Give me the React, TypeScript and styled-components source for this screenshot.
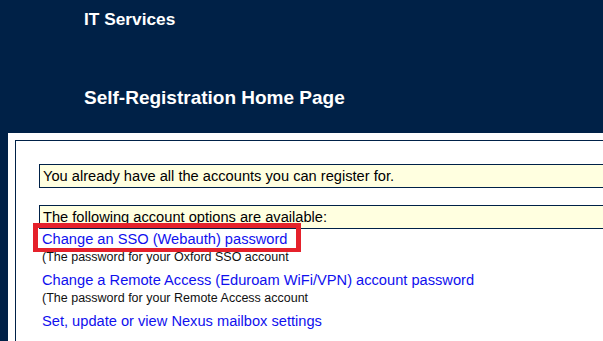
import React from 'react';
import styled, { createGlobalStyle } from 'styled-components';

const GlobalStyle = createGlobalStyle`
	html, body {
		margin: 0;
		padding: 0;
		background: #002147;
		overflow: hidden;
	}
	body {
		font-family: "Liberation Sans", Arial, sans-serif;
	}
`;

const Page = styled.div`
	display: flex;
	flex-direction: column;
	height: 100vh;
	padding-left: 8px;
	box-sizing: border-box;
`;

const Header = styled.header`
	flex: none;
	height: 133px;
	padding-left: 76px;
	box-sizing: border-box;
	color: #ffffff;
	font-weight: bold;
`;

const Brand = styled.div`
	padding-top: 9px;
	font-size: 17.3px;
	line-height: 20px;
`;

const Title = styled.h1`
	margin: 57px 0 0;
	font-size: 19px;
	line-height: 24px;
	font-weight: bold;
`;

const Sheet = styled.main`
	flex: 1;
	display: flex;
	min-height: 0;
	background: #ffffff;
	padding: 7px 0 0 7px;
	box-sizing: border-box;
	overflow: hidden;
`;

const Panel = styled.section`
	flex: 1;
	border: 1px solid #002147;
	border-right: none;
	border-bottom: none;
	padding: 23px 0 0 23px;
	box-sizing: border-box;
	overflow: hidden;
`;

const Notice = styled.div<{ $gap?: number }>`
	border: 1px solid #002147;
	border-right: none;
	background: #ffffe0;
	padding-left: 3px;
	font-size: 14.65px;
	line-height: 22px;
	color: #000000;
	white-space: nowrap;
	margin-bottom: ${(p) => p.$gap ?? 0}px;
`;

const Options = styled.ul`
	list-style: none;
	margin: 0;
	padding: 0 0 0 3px;
`;

const Option = styled.li`
	position: relative;
	margin-bottom: 4px;
`;

const OptionLink = styled.a`
	display: block;
	font-size: 14.65px;
	line-height: 20px;
	color: #1010ee;
	text-decoration: none;
	white-space: nowrap;
`;

const Hint = styled.div`
	font-size: 12.5px;
	line-height: 17px;
	color: #111111;
	white-space: nowrap;
`;

const Highlight = styled.span`
	position: absolute;
	left: -9px;
	top: -6px;
	width: 268px;
	height: 29px;
	border: 5px solid #e5212b;
	border-bottom-width: 4px;
	box-sizing: border-box;
	pointer-events: none;
`;

const options = [
	{ label: 'Change an SSO (Webauth) password', hint: '(The password for your Oxford SSO account', marked: true },
	{ label: 'Change a Remote Access (Eduroam WiFi/VPN) account password', hint: '(The password for your Remote Access account' },
	{ label: 'Set, update or view Nexus mailbox settings' },
];

export default function App() {
	return (
		<>
			<GlobalStyle />
			<Page>
				<Header>
					<Brand>IT Services</Brand>
					<Title>Self-Registration Home Page</Title>
				</Header>
				<Sheet>
					<Panel>
						<Notice $gap={17}>You already have all the accounts you can register for.</Notice>
						<Notice>The following account options are available:</Notice>
						<Options>
							{options.map((o) => (
								<Option key={o.label}>
									{o.marked && <Highlight />}
									<OptionLink href="#">{o.label}</OptionLink>
									{o.hint && <Hint>{o.hint}</Hint>}
								</Option>
							))}
						</Options>
					</Panel>
				</Sheet>
			</Page>
		</>
	);
}
